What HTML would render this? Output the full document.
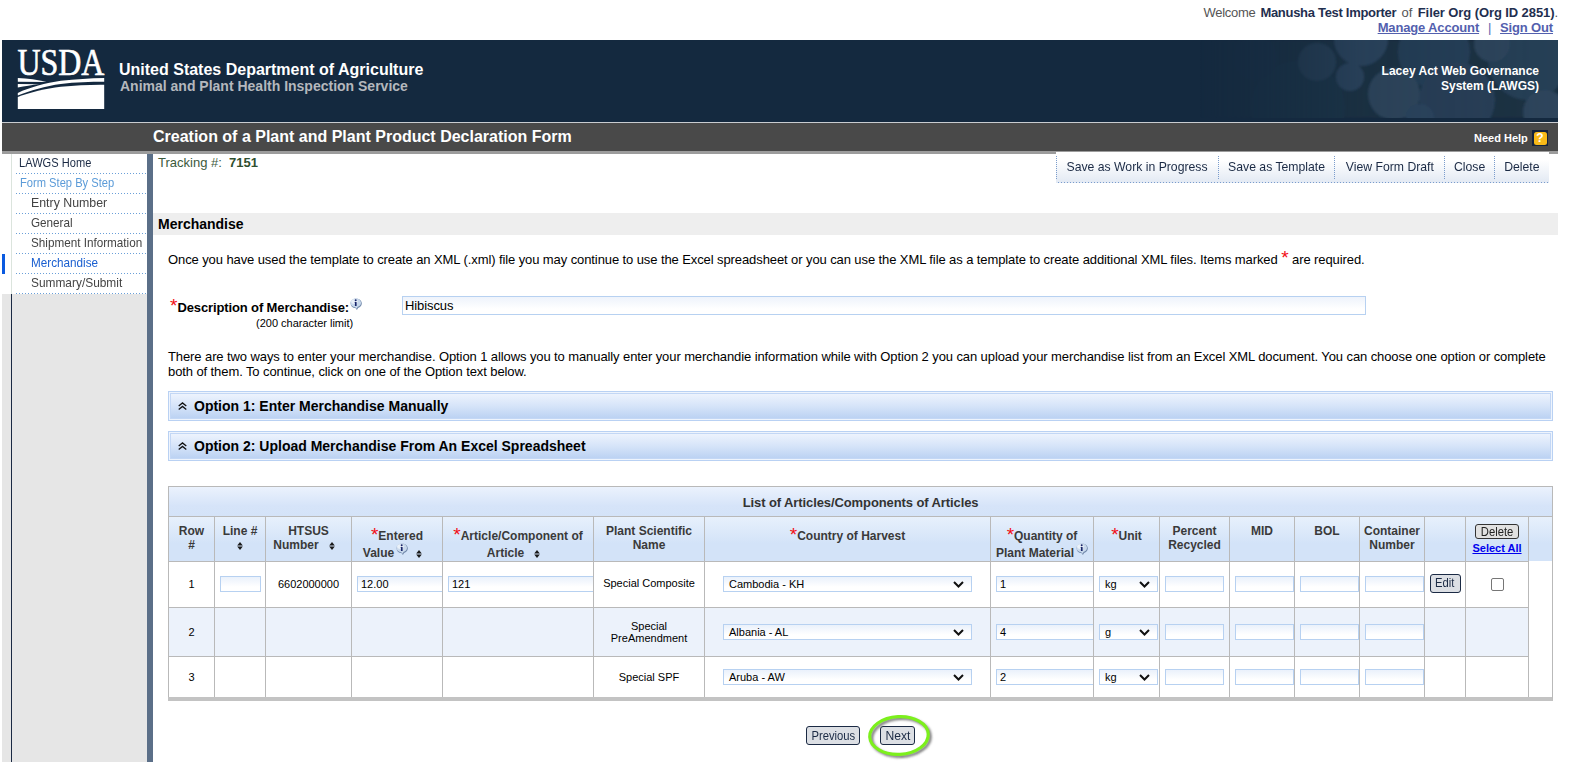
<!DOCTYPE html>
<html lang="en">
<head>
<meta charset="utf-8">
<title>Creation of a Plant and Plant Product Declaration Form</title>
<style>
*{box-sizing:border-box;margin:0;padding:0}
html,body{width:1580px;height:762px;overflow:hidden;background:#fff}
body{font-family:"Liberation Sans",Arial,sans-serif;font-size:13px;color:#000;position:relative}
.abs{position:absolute;white-space:nowrap}
a{color:#5a66b0}
/* top welcome */
#welcome{right:22px;top:5px;font-size:13px;line-height:15px;color:#555;text-align:right;letter-spacing:-0.02px}
#welcome b{color:#1f2f4f;font-weight:bold;letter-spacing:-0.3px}
#links{right:27px;top:20px;font-size:13px;line-height:15px;color:#5a66b0;font-weight:bold;letter-spacing:-0.15px}
#links a{color:#5360ae;text-decoration:underline}
/* header */
#hdr{left:2px;top:40px;width:1556px;height:82px;background:#14293f;overflow:hidden}
#hdrline{left:2px;top:122px;width:1556px;height:1px;background:#c9ccd0}
#bar{left:2px;top:123px;width:1556px;height:28px;background:#494949}
#barline{left:2px;top:151px;width:1556px;height:3px;background:#9c9c9c}
#t1{left:119px;top:61px;font-size:16px;font-weight:bold;color:#fff;line-height:18px}
#t2{left:120px;top:78px;font-size:14px;font-weight:bold;color:#b4b8bd;line-height:16px}
#t3{right:41px;top:64px;font-size:12px;font-weight:bold;color:#fff;line-height:14.5px;text-align:right}
#title{left:153px;top:128px;font-size:16px;font-weight:bold;color:#fff;line-height:18px}
#help{left:1474px;top:132px;font-size:11px;font-weight:bold;color:#fff;line-height:13px}
#helpic{left:1532px;top:130px;width:16px;height:16px;background:#14233c}
#helpic span{position:absolute;left:1.5px;top:1.5px;width:13px;height:13px;background:#f8b918;border-radius:2.5px;color:#fff;font-weight:bold;font-size:12px;line-height:13.5px;text-align:center}
/* sidebar */
#sbg{left:2px;top:294px;width:145px;height:468px;background:#e6e6e6}
#sline{left:11px;top:294px;width:1px;height:468px;background:#1b2a44}
#sline2{left:11px;top:154px;width:1px;height:140px;background:#dbe4dd}
#sbar{left:147px;top:154px;width:6px;height:608px;background:#5b6f88}
#sact{left:2px;top:254px;width:3px;height:20px;background:#0a5ae0}
.mi{position:absolute;left:16px;width:131px;height:20px;background:repeating-linear-gradient(90deg,#6a9fd8 0 1px,transparent 1px 3px) 0 19px/100% 1px no-repeat;font-size:13px;line-height:17px;color:#444;white-space:nowrap}
.mi span{display:inline-block;transform-origin:0 50%;transform:scaleX(.9)}

/* main */
#trk{left:158px;top:155px;font-size:13px;line-height:15px;color:#3c5a3c}
#trk b{color:#2f4f2f}
#tool{left:1056px;top:152px;width:493px;height:31px;background:repeating-linear-gradient(90deg,transparent 0 2px,#7a9ccc 2px 3px) 0 30px/100% 1px no-repeat,linear-gradient(#fff 0%,#fff 25%,#e2e9f3 100%)}
.tb{position:absolute;top:0;height:30px;font-size:13px;line-height:30.5px;color:#1b2a44;white-space:nowrap;text-align:center}
.tb span{display:inline-block;transform:scaleX(.94)}
.ts{position:absolute;top:4px;height:23px;width:0;border-left:1px dotted #7a9ccc}
#sec{left:153px;top:213px;width:1405px;height:22px;background:#eeeeee}
#sect{left:158px;top:216px;font-size:14px;font-weight:bold;line-height:16px}
.p{font-size:13px;line-height:14.5px;letter-spacing:-0.095px}
.req{color:#f20d14}
#desc{left:170px;top:298px;font-size:13px;font-weight:bold;line-height:20px;letter-spacing:-0.12px}
#lim{left:256px;top:317px;font-size:11px;line-height:13px}
#dinp{left:402px;top:296px;width:964px;height:19px;border:1px solid #b7d1f1;background:linear-gradient(#eef3fb,#fff 70%);font-size:13px;line-height:18px;padding-left:2px;letter-spacing:-0.1px}
.opt{position:absolute;left:168px;width:1385px;height:30px;border:1px solid #b9d1f3;background:#eef4fd;padding:1px}
.opt div{height:26px;border:1px solid #c3d7f5;background:linear-gradient(#edf3fd 0%,#d6e4f9 50%,#bcd2f3 100%);font-size:14px;font-weight:bold;line-height:25px;padding-left:23px;white-space:nowrap;position:relative}
.opt svg{position:absolute;left:7px;top:8px}

/* table */
#tbl{position:absolute;left:168px;top:486px;width:1385px;border-collapse:separate;border-spacing:0;table-layout:fixed;border-right:1px solid #b9b9b9;border-bottom:4px solid #c3c3c3;font-size:11px}
#tbl td,#tbl th{border-left:1px solid #b9b9b9;border-top:1px solid #b9b9b9;padding:0;text-align:center;vertical-align:middle;overflow:hidden;white-space:nowrap;position:relative}
#tbl .cap{height:30px;background:linear-gradient(#ebf2fd,#d6e4f9 65%,#d4e3f8);font-size:13px;font-weight:bold;color:#333;letter-spacing:-0.1px;padding-top:1px}
#tbl th{height:45px;background:linear-gradient(#e7f0fc,#d3e3f8 60%,#d3e3f8);font-size:12px;font-weight:bold;color:#3a3a3a;vertical-align:top;padding-top:7px;line-height:13.5px;white-space:normal}
#tbl th.r{padding-top:10px;line-height:17px}
#tbl th>div{position:relative;top:1px}
#tbl th .req{font-size:19px;line-height:0;font-weight:normal;vertical-align:-1px}
#tbl tr.r1 td{height:46px}
#tbl tr.r1 .in,#tbl tr.r1 .sel{margin-top:-8.5px}
#tbl tr.r1 td{padding-bottom:2px}
#tbl tr.r1 td.pl{padding-bottom:4px}
#tbl tr.r2 td{height:49px;background:#ecf2fb}
#tbl tr.r3 td{height:41px}
#tbl td.x{border-top:0;background:#fff !important}
.in{display:block;position:absolute;left:5px;top:50%;margin-top:-8px;height:16px;width:59px;border:1px solid #b7d1f1;background:linear-gradient(#eaf1fb,#fff 70%);font-size:11px;line-height:14px;text-align:left;padding-left:3px;color:#000}
.sel{display:block;position:absolute;top:50%;margin-top:-8px;height:16px;border:1px solid #b7d1f1;background:linear-gradient(#eaf1fb,#fff 70%);font-size:11px;line-height:14px;text-align:left;padding-left:5px;color:#000}
.sel svg{position:absolute;right:7px;top:4px}
.srt{display:inline-block;width:6px;height:8px;vertical-align:-1px;margin:0 9px 0 10px}
.inf+.srt{margin-left:8px}
.btn{display:inline-block;border:1px solid #1b2a44;border-radius:3px;background:#dcdfe4;color:#1b2a44;font-weight:normal;white-space:nowrap}

.inf{vertical-align:baseline;position:relative;top:-2px;margin-left:2px}
#bdel{width:44px;height:15px;line-height:14px;font-size:12.5px;position:relative;top:-1px;border-color:#333;color:#222;background:#e1e1e1}
#selall{color:#0000ee;text-decoration:underline;font-size:11px;font-weight:bold;position:relative;top:2px}
#bedit{width:31px;height:19px;line-height:17px;font-size:12.5px;vertical-align:middle}
.chk{display:inline-block;width:13px;height:13px;border:1px solid #767676;border-radius:2px;background:#fff;vertical-align:middle;position:relative;top:1px}
#bprev{left:806px;top:726px;width:54px;height:19px;line-height:18px;font-size:12.5px;text-align:center}
#bnext{left:880px;top:726px;width:35px;height:19px;line-height:18px;font-size:12.5px;text-align:center}
#bnext span{transform:scaleX(.97)}
.btn span{display:inline-block;transform:scaleX(.9)}
#ell{left:859px;top:708px}
#tbl td.pl{white-space:normal;line-height:12px;padding-left:8px;padding-right:8px}
</style>
</head>
<body>
<div class="abs" id="welcome"><span style="letter-spacing:-0.3px">Welcome</span> <b style="margin-left:1.4px">Manusha Test Importer</b> <span style="margin:0 1.8px 0 1.8px">of</span> <b style="letter-spacing:-0.09px">Filer Org (Org ID 2851)</b>.</div>
<div class="abs" id="links"><a>Manage Account</a> <span style="margin:0 5.4px 0 5.4px;font-weight:normal">|</span> <a>Sign Out</a></div>

<div class="abs" id="hdr"><svg width="1556" height="82" viewBox="2 40 1556 82" style="position:absolute;left:0;top:0">
<defs>
<linearGradient id="fade" x1="0" x2="1" y1="0" y2="0"><stop offset="0" stop-color="#fff" stop-opacity="0"/><stop offset=".45" stop-color="#fff" stop-opacity=".75"/><stop offset="1" stop-color="#fff" stop-opacity="1"/></linearGradient>
<mask id="mk"><rect x="1200" y="40" width="358" height="82" fill="url(#fade)"/></mask>
<filter id="bl"><feGaussianBlur stdDeviation="0.8"/></filter>
</defs>
<g mask="url(#mk)" filter="url(#bl)">
<rect x="1200" y="40" width="358" height="78" fill="#1a3143"/>
<circle cx="1298" cy="108" r="47" fill="#1d3547"/>
<circle cx="1255" cy="58" r="22" fill="#1b3347"/>
<circle cx="1434" cy="52" r="36" fill="#284058"/>
<circle cx="1361" cy="39" r="27" fill="#2e4661"/>
<circle cx="1317" cy="62" r="19" fill="#294258"/>
<circle cx="1350" cy="77" r="14" fill="#2f4761"/>
<circle cx="1457" cy="100" r="38" fill="#294159"/>
<circle cx="1394" cy="94" r="26" fill="#30485f"/>
<circle cx="1528" cy="60" r="40" fill="#284057"/>
<circle cx="1545" cy="112" r="22" fill="#2d455c"/>
<circle cx="1492" cy="44" r="18" fill="#2d455c"/>
<circle cx="1420" cy="118" r="14" fill="#2e4661"/>
</g>
<rect x="2" y="118" width="1556" height="4" fill="#14293f"/>
</svg></div>
<div class="abs" id="hdrline"></div>
<div class="abs" id="bar"></div>
<div class="abs" id="barline"></div>
<svg class="abs" id="logo" width="90" height="64" viewBox="0 0 90 64" style="left:16px;top:47px">
<text x="1.4" y="28" font-family="'Liberation Serif',serif" font-size="38.5" fill="#fff" stroke="#fff" stroke-width=".7" textLength="87" lengthAdjust="spacingAndGlyphs">USDA</text>
<g fill="#fff" transform="translate(1.8,30.9)">
<path d="M0 31 L86.4 31 L86.4 6.8 C72 6.6 58 7.6 43 8.9 C28 10.6 12 14.6 0 19 Z"/>
<path d="M86.4 0 C72 .3 58 1.3 43 2.9 C28 5 12 9.5 0 15 L0 17.5 C12 12.6 28 8 43 6 C58 4.4 72 3.9 86.4 3.9 Z"/>
<path d="M0 0 C10 .3 20 1.8 28.6 4.1 L0 3.9 Z"/>
<path d="M0 6 L21.4 6.3 C14 7 7 8.2 0 9.7 Z"/>
</g></svg>
<div class="abs" id="t1">United States Department of Agriculture</div>
<div class="abs" id="t2">Animal and Plant Health Inspection Service</div>
<div class="abs" id="t3">Lacey Act Web Governance<br>System (LAWGS)</div>
<div class="abs" id="title">Creation of a Plant and Plant Product Declaration Form</div>
<div class="abs" id="help">Need Help</div>
<div class="abs" id="helpic"><span>?</span></div>

<div class="abs" id="sbg"></div>
<div class="abs" id="sline"></div>
<div class="abs" id="sline2"></div>
<div class="abs" id="sbar"></div>
<div class="abs" id="sact"></div>
<div class="mi" style="top:154px;padding-left:3px;color:#1b2a44"><span style="transform:scaleX(0.853)">LAWGS Home</span></div>
<div class="mi" style="top:174px;padding-left:4px;color:#5b9bd8"><span style="transform:scaleX(0.858)">Form Step By Step</span></div>
<div class="mi" style="top:194px;padding-left:15px"><span style="transform:scaleX(0.95)">Entry Number</span></div>
<div class="mi" style="top:214px;padding-left:15px"><span>General</span></div>
<div class="mi" style="top:234px;padding-left:15px"><span>Shipment Information</span></div>
<div class="mi" style="top:254px;padding-left:15px;color:#1a5fd0"><span>Merchandise</span></div>
<div class="mi" style="top:274px;padding-left:15px"><span style="transform:scaleX(0.915)">Summary/Submit</span></div>


<div class="abs" id="trk">Tracking #:&nbsp; <b>7151</b></div>
<div class="abs" id="tool">
 <div class="ts" style="left:0"></div><div class="ts" style="left:162px"></div><div class="ts" style="left:278px"></div><div class="ts" style="left:388px"></div><div class="ts" style="left:438px"></div>
 <div class="tb" style="left:0;width:163px"><span>Save as Work in Progress</span></div>
 <div class="tb" style="left:163px;width:115px"><span>Save as Template</span></div>
 <div class="tb" style="left:279px;width:109px"><span>View Form Draft</span></div>
 <div class="tb" style="left:389px;width:49px"><span>Close</span></div>
 <div class="tb" style="left:439px;width:54px"><span>Delete</span></div>
</div>
<div class="abs" id="sec"></div>
<div class="abs" id="sect">Merchandise</div>
<div class="abs p" style="left:168px;top:253px">Once you have used the template to create an XML (.xml) file you may continue to use the Excel spreadsheet or you can use the XML file as a template to create additional XML files. Items marked <span class="req" style="font-size:19px;line-height:10px;letter-spacing:0;vertical-align:0px">*</span> are required.</div>
<div class="abs" id="desc"><span class="req" style="font-size:19px;line-height:10px;letter-spacing:0;font-weight:normal;vertical-align:0.5px">*</span>Description of Merchandise:</div>
<svg class="abs" style="left:350px;top:298px" width="12" height="12" viewBox="0 0 12 12"><path d="M6.2 .8 C9.4 .8 11.8 2.8 11.8 5.4 C11.8 7.6 10.2 9.3 8.1 9.9 L6.9 12 L5.4 10 C2.6 9.8 .6 7.9 .6 5.4 C.6 2.8 3 .8 6.2 .8 Z" fill="#7088aa"/><path d="M5.8 .4 C8.8 .4 11 2.3 11 4.8 C11 6.9 9.5 8.4 7.5 9 L6.6 10.8 L5.2 9.2 C2.5 9 .4 7.2 .4 4.8 C.4 2.3 2.7 .4 5.8 .4 Z" fill="#c9d9ec"/><ellipse cx="4.4" cy="3.6" rx="3.2" ry="2.4" fill="#eaf1f9"/><circle cx="5.7" cy="2.3" r="1" fill="#18266a"/><path d="M4.7 4 H6.6 V8 H4.9 V4.9 H4.7 Z" fill="#18266a"/></svg>
<div class="abs" id="lim">(200 character limit)</div>
<div class="abs" id="dinp">Hibiscus</div>
<div class="abs p" style="left:168px;top:350px">There are two ways to enter your merchandise. Option 1 allows you to manually enter your merchandie information while with Option 2 you can upload your merchandise list from an Excel XML document. You can choose one option or complete<br>both of them. To continue, click on one of the Option text below.</div>
<div class="opt" style="top:391px"><div><svg width="9" height="8" viewBox="0 0 9 8"><path d="M0.7 3.9 L4.5 0.9 L8.3 3.9 M0.7 7.4 L4.5 4.4 L8.3 7.4" fill="none" stroke="#111" stroke-width="1.3"/></svg>Option 1: Enter Merchandise Manually</div></div>
<div class="opt" style="top:431px"><div><svg width="9" height="8" viewBox="0 0 9 8"><path d="M0.7 3.9 L4.5 0.9 L8.3 3.9 M0.7 7.4 L4.5 4.4 L8.3 7.4" fill="none" stroke="#111" stroke-width="1.3"/></svg>Option 2: Upload Merchandise From An Excel Spreadsheet</div></div>
<table id="tbl"><col style="width:46px"><col style="width:51px"><col style="width:86px"><col style="width:91px"><col style="width:151px"><col style="width:111px"><col style="width:286px"><col style="width:103px"><col style="width:66px"><col style="width:70px"><col style="width:65px"><col style="width:65px"><col style="width:65px"><col style="width:41px"><col style="width:63px"><col style="width:24px">
<tr><td class="cap" colspan="16">List of Articles/Components of Articles</td></tr>
<tr>
<th><div>Row<br>#</div></th>
<th><div>Line #<br><svg class="srt" style="margin:0" viewBox="0 0 6 8"><path d="M3 0 L5.8 3.5 L0.2 3.5 Z M0.2 4.5 L5.8 4.5 L3 8 Z" fill="#1a1a1a"/></svg></div></th>
<th><div>HTSUS<br>Number<svg class="srt" viewBox="0 0 6 8"><path d="M3 0 L5.8 3.5 L0.2 3.5 Z M0.2 4.5 L5.8 4.5 L3 8 Z" fill="#1a1a1a"/></svg></div></th>
<th class="r"><div><span class="req">*</span>Entered<br>Value<svg class="inf" width="12" height="12" viewBox="0 0 12 12"><path d="M6.2 .8 C9.4 .8 11.8 2.8 11.8 5.4 C11.8 7.6 10.2 9.3 8.1 9.9 L6.9 12 L5.4 10 C2.6 9.8 .6 7.9 .6 5.4 C.6 2.8 3 .8 6.2 .8 Z" fill="#7088aa"/><path d="M5.8 .4 C8.8 .4 11 2.3 11 4.8 C11 6.9 9.5 8.4 7.5 9 L6.6 10.8 L5.2 9.2 C2.5 9 .4 7.2 .4 4.8 C.4 2.3 2.7 .4 5.8 .4 Z" fill="#c9d9ec"/><ellipse cx="4.4" cy="3.6" rx="3.2" ry="2.4" fill="#eaf1f9"/><circle cx="5.7" cy="2.3" r="1" fill="#18266a"/><path d="M4.7 4 H6.6 V8 H4.9 V4.9 H4.7 Z" fill="#18266a"/></svg><svg class="srt" viewBox="0 0 6 8"><path d="M3 0 L5.8 3.5 L0.2 3.5 Z M0.2 4.5 L5.8 4.5 L3 8 Z" fill="#1a1a1a"/></svg></div></th>
<th class="r"><div><span class="req">*</span>Article/Component of<br>Article<svg class="srt" viewBox="0 0 6 8"><path d="M3 0 L5.8 3.5 L0.2 3.5 Z M0.2 4.5 L5.8 4.5 L3 8 Z" fill="#1a1a1a"/></svg></div></th>
<th><div>Plant Scientific<br>Name</div></th>
<th class="r"><div><span class="req">*</span>Country of Harvest</div></th>
<th class="r"><div><span class="req">*</span>Quantity of<br>Plant Material<svg class="inf" width="12" height="12" viewBox="0 0 12 12"><path d="M6.2 .8 C9.4 .8 11.8 2.8 11.8 5.4 C11.8 7.6 10.2 9.3 8.1 9.9 L6.9 12 L5.4 10 C2.6 9.8 .6 7.9 .6 5.4 C.6 2.8 3 .8 6.2 .8 Z" fill="#7088aa"/><path d="M5.8 .4 C8.8 .4 11 2.3 11 4.8 C11 6.9 9.5 8.4 7.5 9 L6.6 10.8 L5.2 9.2 C2.5 9 .4 7.2 .4 4.8 C.4 2.3 2.7 .4 5.8 .4 Z" fill="#c9d9ec"/><ellipse cx="4.4" cy="3.6" rx="3.2" ry="2.4" fill="#eaf1f9"/><circle cx="5.7" cy="2.3" r="1" fill="#18266a"/><path d="M4.7 4 H6.6 V8 H4.9 V4.9 H4.7 Z" fill="#18266a"/></svg></div></th>
<th class="r"><div><span class="req">*</span>Unit</div></th>
<th><div>Percent<br>Recycled</div></th>
<th><div>MID</div></th>
<th><div>BOL</div></th>
<th><div>Container<br>Number</div></th>
<th></th>
<th style="padding-top:7px;line-height:13px"><div><span class="btn" id="bdel"><span>Delete</span></span><br><a id="selall">Select All</a></div></th>
<th style="border-top:1px solid #b9b9b9"></th>
</tr>
<tr class="r1"><td>1</td><td><span class="in" style="left:5px;width:41px"></span></td><td>6602000000</td><td><span class="in" style="left:5px;width:90px">12.00</span></td><td><span class="in" style="left:5px;width:150px">121</span></td><td class="pl">Special Composite</td><td><span class="sel" style="left:18px;width:249px">Cambodia - KH<svg width="11" height="7" viewBox="0 0 11 7"><path d="M1 1 L5.5 5.5 L10 1" fill="none" stroke="#111" stroke-width="2"/></svg></span></td><td><span class="in" style="left:5px;width:100px">1</span></td><td><span class="sel" style="left:5px;width:59px">kg<svg width="11" height="7" viewBox="0 0 11 7"><path d="M1 1 L5.5 5.5 L10 1" fill="none" stroke="#111" stroke-width="2"/></svg></span></td><td><span class="in" style="left:5px;width:59px"></span></td><td><span class="in" style="left:5px;width:59px"></span></td><td><span class="in" style="left:5px;width:59px"></span></td><td><span class="in" style="left:5px;width:59px"></span></td><td><span class="btn" id="bedit"><span>Edit</span></span></td><td><span class="chk"></span></td><td class="x"></td></tr>
<tr class="r2"><td>2</td><td></td><td></td><td></td><td></td><td class="pl">Special PreAmendment</td><td><span class="sel" style="left:18px;width:249px">Albania - AL<svg width="11" height="7" viewBox="0 0 11 7"><path d="M1 1 L5.5 5.5 L10 1" fill="none" stroke="#111" stroke-width="2"/></svg></span></td><td><span class="in" style="left:5px;width:100px">4</span></td><td><span class="sel" style="left:5px;width:59px">g<svg width="11" height="7" viewBox="0 0 11 7"><path d="M1 1 L5.5 5.5 L10 1" fill="none" stroke="#111" stroke-width="2"/></svg></span></td><td><span class="in" style="left:5px;width:59px"></span></td><td><span class="in" style="left:5px;width:59px"></span></td><td><span class="in" style="left:5px;width:59px"></span></td><td><span class="in" style="left:5px;width:59px"></span></td><td></td><td></td><td class="x"></td></tr>
<tr class="r3"><td>3</td><td></td><td></td><td></td><td></td><td class="pl">Special SPF</td><td><span class="sel" style="left:18px;width:249px">Aruba - AW<svg width="11" height="7" viewBox="0 0 11 7"><path d="M1 1 L5.5 5.5 L10 1" fill="none" stroke="#111" stroke-width="2"/></svg></span></td><td><span class="in" style="left:5px;width:100px">2</span></td><td><span class="sel" style="left:5px;width:59px">kg<svg width="11" height="7" viewBox="0 0 11 7"><path d="M1 1 L5.5 5.5 L10 1" fill="none" stroke="#111" stroke-width="2"/></svg></span></td><td><span class="in" style="left:5px;width:59px"></span></td><td><span class="in" style="left:5px;width:59px"></span></td><td><span class="in" style="left:5px;width:59px"></span></td><td><span class="in" style="left:5px;width:59px"></span></td><td></td><td></td><td class="x"></td></tr>
</table>
<div class="abs btn" id="bprev"><span>Previous</span></div>
<div class="abs btn" id="bnext"><span>Next</span></div>
<svg class="abs" id="ell" width="80" height="56" viewBox="0 0 80 56"><defs><filter id="sh" x="-20%" y="-20%" width="150%" height="150%"><feGaussianBlur stdDeviation="1.2"/></filter></defs><ellipse cx="42" cy="29.5" rx="29.3" ry="18.9" fill="none" stroke="#444" stroke-opacity=".7" stroke-width="3" filter="url(#sh)" transform="rotate(-3 42 29.5)"/><ellipse cx="40" cy="27.5" rx="29.3" ry="18.9" fill="none" stroke="#7cf01c" stroke-width="3.2" transform="rotate(-3 40 27.5)"/></svg>


</body>
</html>
